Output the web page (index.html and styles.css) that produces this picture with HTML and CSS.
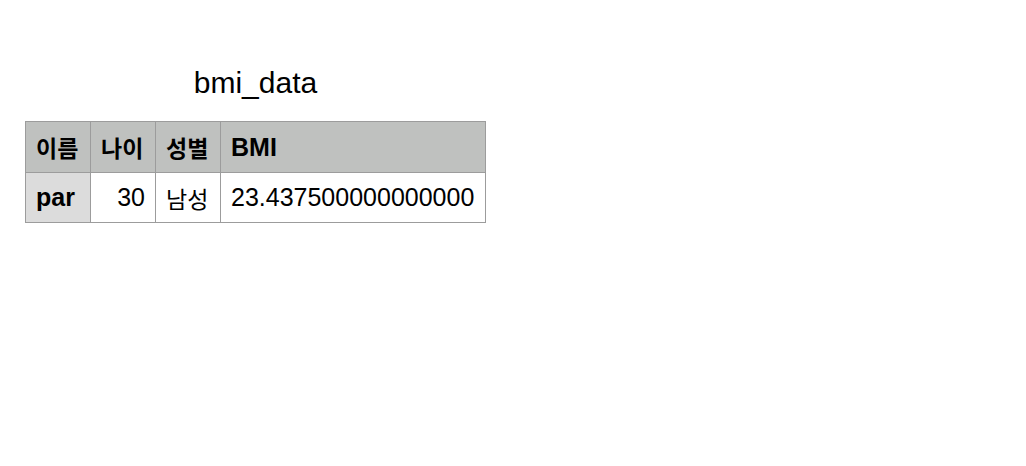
FILE: index.html
```html
<!DOCTYPE html>
<html lang="ko">
<head>
<meta charset="utf-8">
<link rel="stylesheet" href="styles.css">
</head>
<body>
<div class="page">
  <table class="data">
    <caption>bmi_data</caption>
    <thead>
      <tr>
        <th class="c-name ko">이름</th>
        <th class="c-age ko">나이</th>
        <th class="c-sex ko">성별</th>
        <th class="c-bmi">BMI</th>
      </tr>
    </thead>
    <tbody>
      <tr>
        <th class="rowhead">par</th>
        <td class="num">30</td>
        <td class="ko">남성</td>
        <td>23.437500000000000</td>
      </tr>
    </tbody>
  </table>
</div>
</body>
</html>
```

FILE: styles.css
```css
html, body {
  margin: 0;
  padding: 0;
  background: #ffffff;
}

.page {
  padding: 66px 0 0 25px;
  font-family: "Liberation Sans", Arial, "Noto Sans CJK KR", sans-serif;
  color: #000;
}

.data {
  border-collapse: collapse;
  table-layout: fixed;
  width: 461px;
}

.data caption {
  font-size: 30px;
  line-height: 34px;
  padding-bottom: 21px;
  text-align: center;
}

.data th,
.data td {
  border: 1px solid #9c9c9c;
  padding: 0 10px;
  font-size: 25px;
  text-align: left;
  vertical-align: middle;
  white-space: nowrap;
}

.data thead th {
  background: #bfc1bf;
  font-weight: bold;
  height: 50px;
}

.data tbody th,
.data tbody td {
  height: 49px;
}

.data .c-name,
.data .c-age,
.data .c-sex { width: 44px; }
.data .c-bmi { width: auto; }

.data .ko {
  font-size: 23px;
}

.data .rowhead {
  background: #dcdcdc;
  font-weight: bold;
}

.data .num {
  text-align: right;
}
```
